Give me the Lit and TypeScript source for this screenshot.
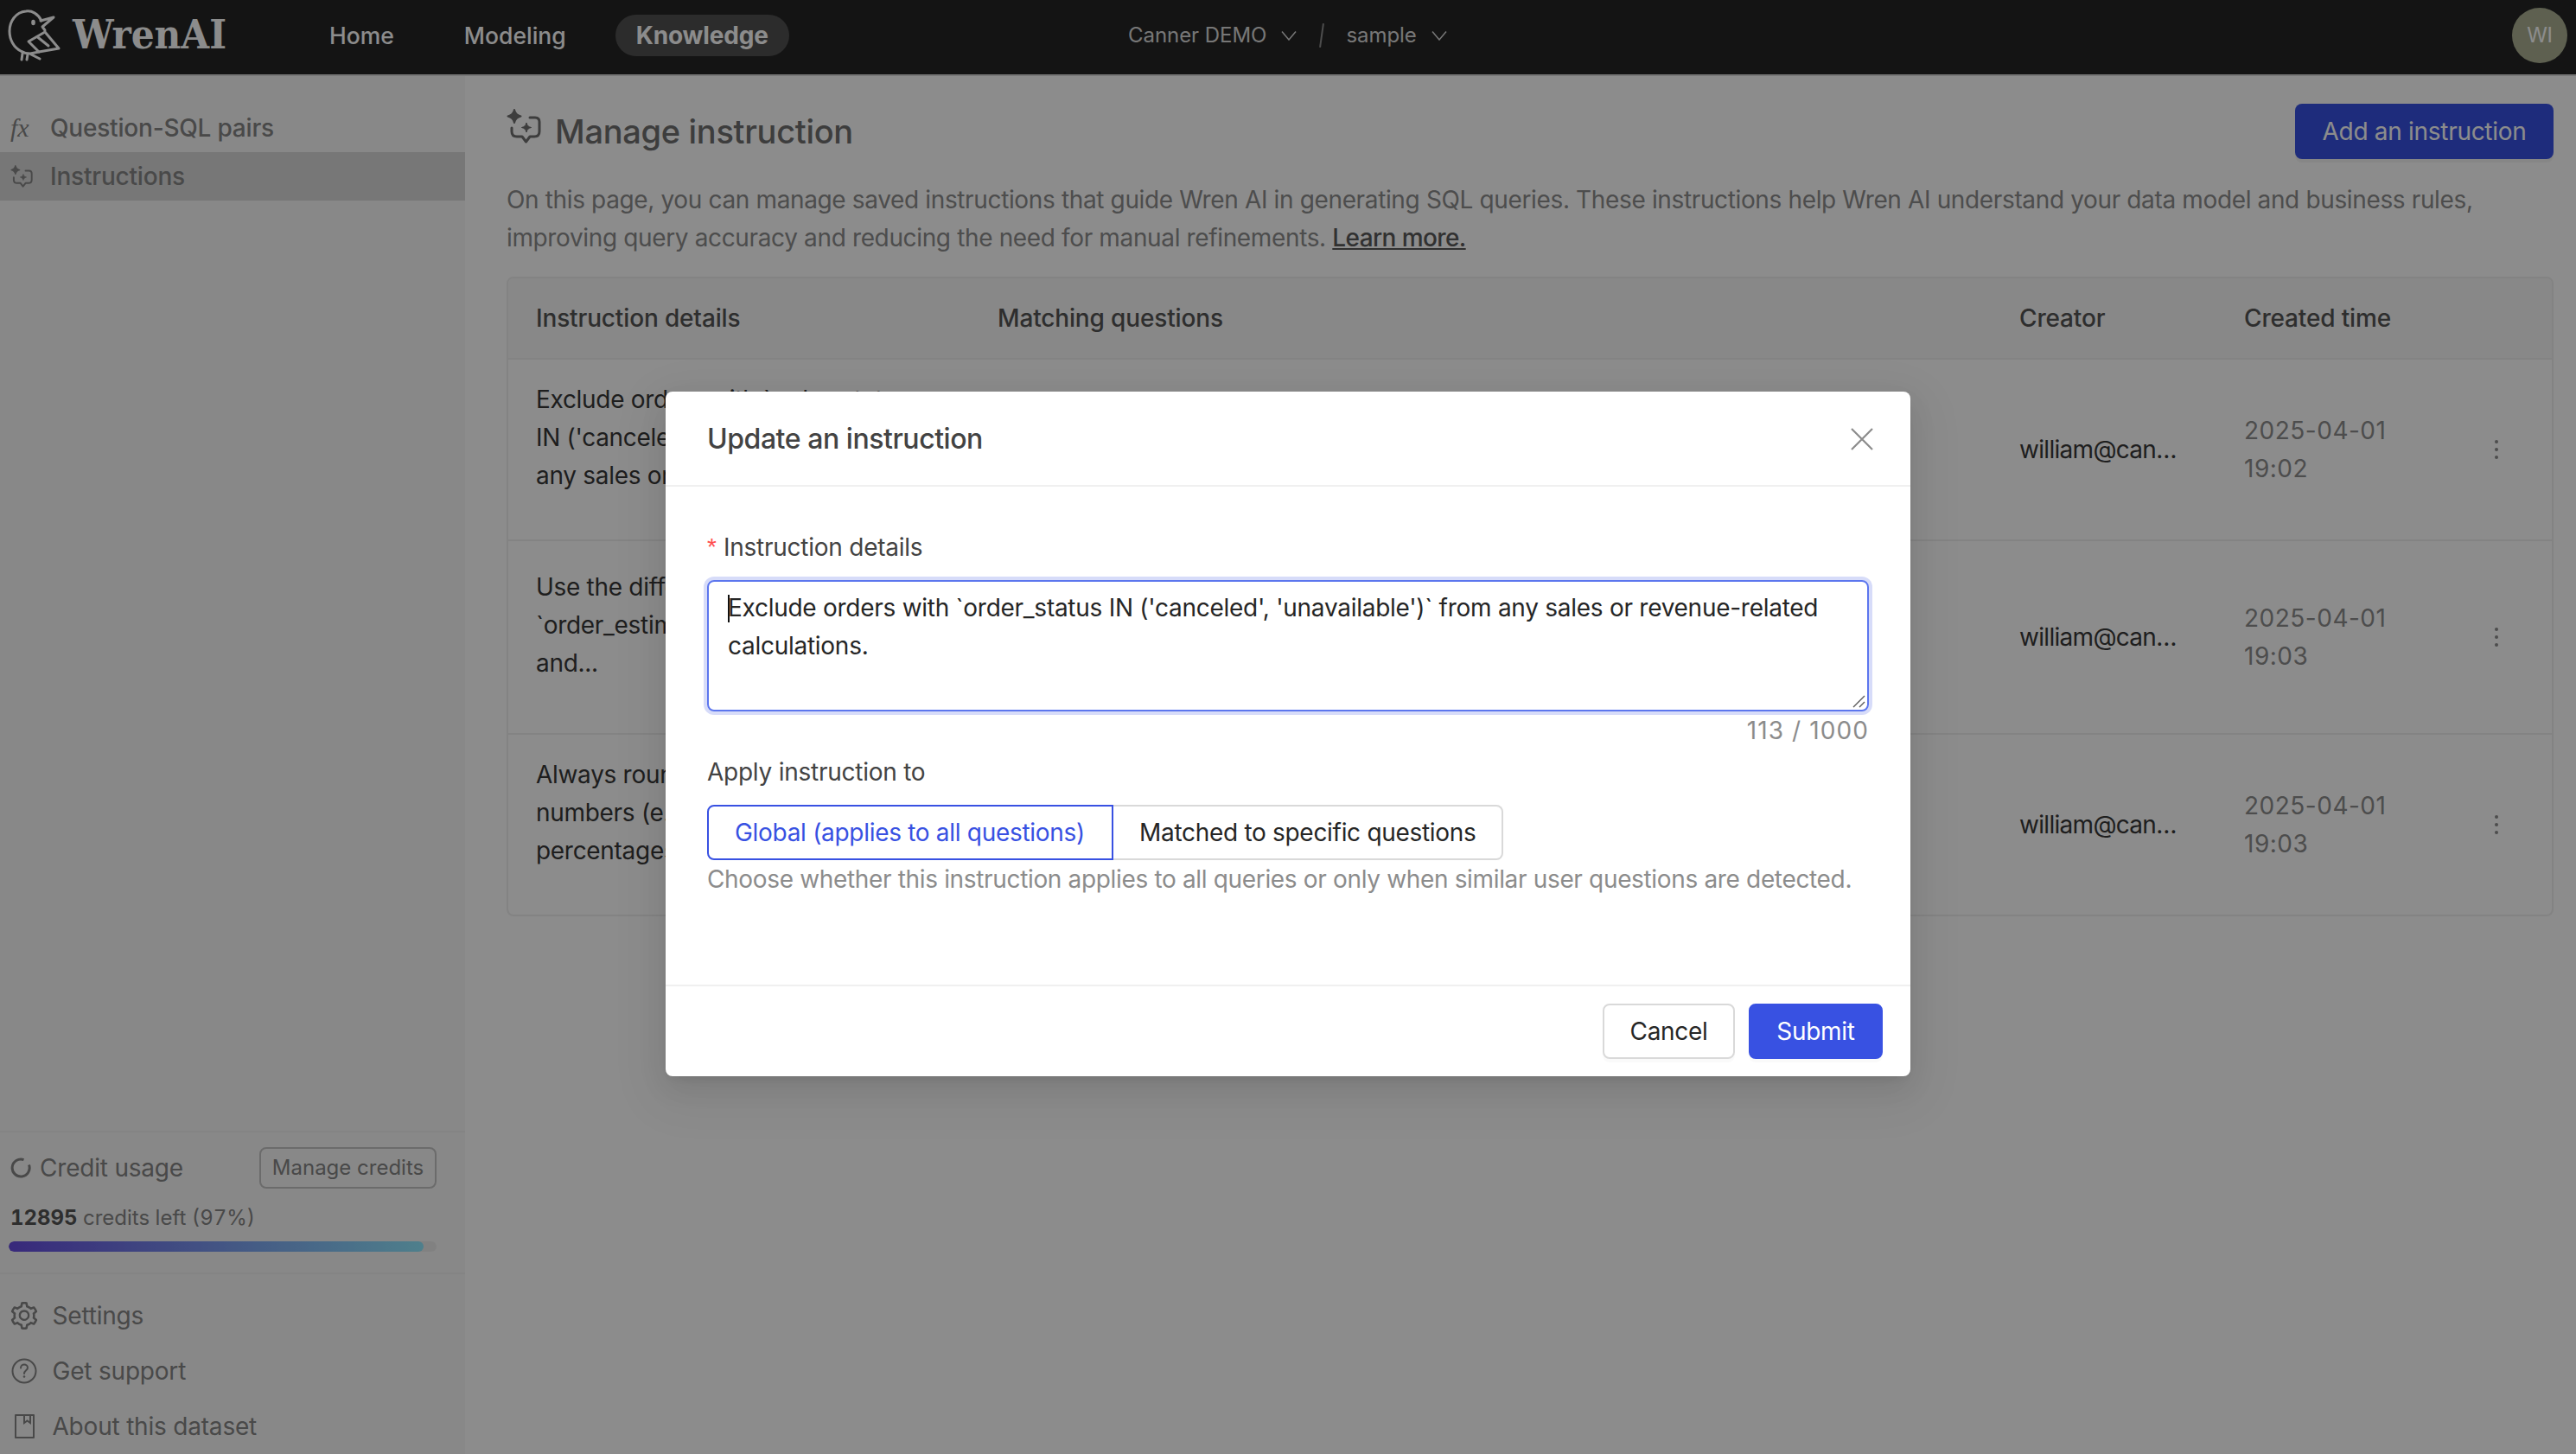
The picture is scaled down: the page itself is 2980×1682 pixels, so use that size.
import { LitElement, html, css } from "lit";
import { customElement } from "lit/decorators.js";

const GEAR = "M924.8 625.7l-65.5-56c3.1-19 4.7-38.4 4.7-57.8s-1.6-38.8-4.7-57.8l65.5-56a32.03 32.03 0 0 0 9.3-35.2l-.9-2.6a443.74 443.74 0 0 0-79.7-137.9l-1.8-2.1a32.12 32.12 0 0 0-35.1-9.5l-81.3 28.9c-30-24.6-63.5-44-99.7-57.6l-15.7-85a32.05 32.05 0 0 0-25.8-25.7l-2.7-.5c-52.1-9.4-106.9-9.4-159 0l-2.7.5a32.05 32.05 0 0 0-25.8 25.7l-15.8 85.4a351.86 351.86 0 0 0-99 57.4l-81.9-29.1a32 32 0 0 0-35.1 9.5l-1.8 2.1a446.02 446.02 0 0 0-79.7 137.9l-.9 2.6c-4.5 12.5-.8 26.5 9.3 35.2l66.3 56.6c-3.1 18.8-4.6 38-4.6 57.1 0 19.2 1.5 38.4 4.6 57.1L99 625.5a32.03 32.03 0 0 0-9.3 35.2l.9 2.6c18.1 50.4 44.9 96.9 79.7 137.9l1.8 2.1a32.12 32.12 0 0 0 35.1 9.5l81.9-29.1c29.8 24.5 63.1 43.9 99 57.4l15.8 85.4a32.05 32.05 0 0 0 25.8 25.7l2.7.5a449.4 449.4 0 0 0 159 0l2.7-.5a32.05 32.05 0 0 0 25.8-25.7l15.7-85a350 350 0 0 0 99.7-57.6l81.3 28.9a32 32 0 0 0 35.1-9.5l1.8-2.1c34.8-41.1 61.6-87.5 79.7-137.9l.9-2.6c4.5-12.3.8-26.3-9.3-35zM788.3 465.9c2.5 15.1 3.8 30.6 3.8 46.1s-1.3 31-3.8 46.1l-6.6 40.1 74.7 63.9a370.03 370.03 0 0 1-42.6 73.6L721 702.8l-31.4 25.8c-23.9 19.6-50.5 35-79.3 45.8l-38.1 14.3-17.9 97a377.5 377.5 0 0 1-85 0l-17.9-97.2-37.8-14.5c-28.5-10.8-55-26.2-78.7-45.7l-31.4-25.9-93.4 33.2c-17-22.9-31.2-47.6-42.6-73.6l75.5-64.5-6.5-40c-2.4-14.9-3.7-30.3-3.7-45.5 0-15.3 1.2-30.6 3.7-45.5l6.5-40-75.5-64.5c11.3-26.1 25.6-50.7 42.6-73.6l93.4 33.2 31.4-25.9c23.7-19.5 50.2-34.9 78.7-45.7l37.9-14.3 17.9-97.2c28.1-3.2 56.8-3.2 85 0l17.9 97 38.1 14.3c28.7 10.8 55.4 26.2 79.3 45.8l31.4 25.8 92.8-32.9c17 22.9 31.2 47.6 42.6 73.6L781.8 426l6.5 39.9zM512 326c-97.2 0-176 78.8-176 176s78.8 176 176 176 176-78.8 176-176-78.8-176-176-176zm79.2 255.2A111.6 111.6 0 0 1 512 614c-29.9 0-58-11.7-79.2-32.8A111.6 111.6 0 0 1 400 502c0-29.9 11.7-58 32.8-79.2C454 401.6 482.1 390 512 390c29.9 0 58 11.6 79.2 32.8A111.6 111.6 0 0 1 624 502c0 29.9-11.7 58-32.8 79.2z";

const instructionIcon = (cls: string) => html`<svg class=${cls} viewBox="6 6 40 40" fill="none">
  <path d="M15 7c1 4.500 3 6.500 7.500 7.500-4.500 1-6.500 3-7.500 7.500-1-4.500-3-6.500-7.500-7.500 4.500-1 6.500-3 7.500-7.500z" fill="currentColor" stroke="currentColor" stroke-width="2" stroke-linejoin="round"/>
  <path d="M29 22c.8 3.300 2.200 4.700 5.500 5.500-3.300.8-4.700 2.200-5.500 5.500-.8-3.300-2.200-4.700-5.500-5.500 3.300-.8 4.700-2.200 5.500-5.500z" fill="currentColor" stroke="currentColor" stroke-width="1"/>
  <path d="M33 16h6c3.500 0 5 1.600 5 5v11c0 4-2 6-6 6h-5l-4.500 6-4.500-6h-6c-4 0-6-2-6-6v-4" stroke="currentColor" stroke-width="3" stroke-linecap="round" stroke-linejoin="round"/>
</svg>`;

const chevron = html`<svg class="chev" viewBox="0 0 18 12" fill="none"><path d="M1 1.500l8 9.500 8-9.500" stroke="currentColor" stroke-width="1.500"/></svg>`;

const ROWS = [
  { cls: "r1", lines: ["Exclude orders with `order_status", "IN ('canceled', 'unavailable')` from", "any sales or revenue-related"], time: "19:02" },
  { cls: "r2", lines: ["Use the difference between", "`order_estimated_delivery_date`", "and..."], time: "19:03" },
  { cls: "r3", lines: ["Always round monetary values to two", "numbers (e.g., sales, revenue, and", "percentages) in the final output"], time: "19:03" },
];

@customElement("app-root")
export class AppRoot extends LitElement {
  static styles = css`
    :host { display: block; position: relative; width: 2980px; height: 1682px; overflow: hidden; background: #fff; font-family: Inter, "Noto Sans", sans-serif; font-size: 28px; line-height: 44px; color: #383838; letter-spacing: -0.3px; }
    * { box-sizing: border-box; }
    .app { display: flex; flex-direction: column; height: 100%; }

    .header { flex: none; height: 88px; background: #262626; border-bottom: 2px solid #d9d9d9; display: flex; align-items: center; padding-bottom: 5px; color: #fff; }
    .logo { flex: none; width: 357px; display: flex; align-items: center; height: 80px; align-self: flex-start; }
    .bird { flex: none; width: 80px; height: 80px; color: #fff; }
    .wordmark { font-family: "DejaVu Serif", serif; font-stretch: condensed; font-weight: 700; font-size: 47px; line-height: 80px; margin-left: 4px; color: #fff; letter-spacing: 0; }
    .nav { flex: none; width: 948px; display: flex; align-items: center; gap: 33px; }
    .nav span { height: 48px; line-height: 48px; padding: 0 24px; border-radius: 24px; font-weight: 500; font-size: 26.5px; letter-spacing: 0; white-space: nowrap; }
    .nav .on { background: rgba(255,255,255,.2); font-weight: 700; font-size: 28px; letter-spacing: -0.15px; }
    .sel { display: flex; align-items: center; color: #d9d9d9; font-size: 24px; line-height: 40px; letter-spacing: -0.05px; }
    .chev { width: 18px; height: 12px; margin: 0 0 0 17px; color: #d9d9d9; flex: none; }
    .slash { width: 2px; height: 28px; background: #8c8c8c; transform: rotate(8deg); margin: 0 27px 0 28px; }
    .avatar { flex: none; margin-left: auto; margin-right: 10px; width: 64px; height: 64px; border-radius: 50%; background: #abb092; color: #fff; font-size: 24px; display: flex; align-items: center; justify-content: center; }

    .body { flex: 1; display: flex; min-height: 0; }
    .side { flex: none; width: 538px; background: #f8f8f8; display: flex; flex-direction: column; padding-top: 32px; color: #858585; letter-spacing: -0.2px; }
    .item { height: 56px; display: flex; align-items: center; font-weight: 500; padding-left: 12px; color: #858585; }
    .item.on { background: #d9d9d9; }
    .item .ic { flex: none; width: 46px; display: flex; align-items: center; }
    .fx { font-family: "Liberation Serif", serif; font-style: italic; font-size: 30px; font-weight: 400; padding-left: 0; }
    .side-ins { width: 26px; height: 26px; display: block; }
    .credit { margin-top: auto; border-top: 2px solid #f0f0f0; border-bottom: 2px solid #f0f0f0; padding: 17px 33px 24px 10px; }
    .c-row { display: flex; align-items: center; justify-content: space-between; height: 48px; padding-left: 2px; }
    .c-lab { display: flex; align-items: center; gap: 10px; color: #858585; }
    .ring { width: 24px; height: 24px; flex: none; color: #858585; }
    .mcbtn { height: 48px; width: 205px; border: 2px solid #c4c4c4; border-radius: 8px; font-size: 24px; line-height: 44px; text-align: center; color: #858585; background: transparent; letter-spacing: 0; }
    .c-left { font-size: 24px; line-height: 32px; margin-top: 18px; padding-left: 2px; color: #858585; letter-spacing: 0; font-variant-numeric: tabular-nums; }
    .c-left b { color: #545454; font-weight: 700; }
    .track { height: 12px; border-radius: 6px; background: #ececec; margin-top: 11px; overflow: hidden; }
    .fill { height: 100%; border-radius: 6px; background: linear-gradient(90deg, #664be0, #8fe8ff); }
    .links { padding-top: 16px; }
    .lnk { height: 64px; display: flex; align-items: center; padding-left: 12px; color: #858585; }
    .lnk .ic { width: 48.5px; flex: none; display: flex; }
    .lnk svg { width: 32px; height: 32px; }

    .main { flex: 1; min-width: 0; padding: 32px 26px 0 48px; }
    .top { display: flex; align-items: center; height: 64px; }
    .top-ins { width: 40px; height: 40px; flex: none; align-self: flex-start; margin-top: 6px; color: #707070; }
    .top h1 { margin: 0 0 0 16px; font-size: 38px; line-height: 60px; font-weight: 500; color: #707070; }
    .add { margin-left: auto; height: 64px; width: 299px; border-radius: 8px; background: #3851e2; color: #fff; font-size: 28px; line-height: 64px; text-align: center; box-shadow: 0 4px 0 rgba(0,0,0,.04); }
    .desc { margin: 25px 0 0; color: #8c8c8c; width: 2330px; letter-spacing: -0.36px; }
    .desc a { color: #595959; text-decoration: underline; font-weight: 500; letter-spacing: -0.6px; }
    .tbl-wrap { margin-top: 23px; border: 2px solid #eeeeee; border-radius: 8px; overflow: hidden; height: 740px; }
    table { border-collapse: separate; border-spacing: 0; table-layout: fixed; width: 2364px; }
    .c1 { width: 534px; } .c2 { width: 1182px; } .c3 { width: 260px; } .c4 { width: 276px; } .c5 { width: 112px; }
    th { height: 94px; background: #f7f7f7; text-align: left; font-weight: 500; color: #545454; padding: 0 32px; border-bottom: 2px solid #eeeeee; letter-spacing: -0.15px; }
    td { padding: 0 32px; border-bottom: 2px solid #eeeeee; vertical-align: middle; color: #383838; }
    .r1 td { height: 210px; } .r2 td { height: 224px; } .r3 td { height: 208px; border-bottom: 0; }
    td.dt { padding-bottom: 28px; white-space: nowrap; }
    td.who { white-space: nowrap; letter-spacing: -0.7px; }
    td.when { color: #8c8c8c; white-space: nowrap; letter-spacing: 0.5px; }
    td.more { padding: 0; }
    .dots { display: block; width: 6px; height: 28px; margin-left: 45px; color: #8c8c8c; }

    .mask { position: absolute; inset: 0; background: rgba(0,0,0,.45); display: flex; justify-content: center; padding-top: 453px; }
    .modal { width: 1440px; height: 792px; background: #fff; border-radius: 8px; display: flex; flex-direction: column; box-shadow: 0 12px 32px 0 rgba(0,0,0,.08), 0 6px 12px -8px rgba(0,0,0,.12), 0 18px 56px 16px rgba(0,0,0,.05); }
    .m-head { flex: none; height: 110px; border-bottom: 2px solid #f0f0f0; display: flex; align-items: center; justify-content: space-between; padding: 2px 43px 0 48px; }
    .m-title { font-size: 32px; line-height: 44px; font-weight: 500; color: #434343; letter-spacing: -0.45px; }
    .close { width: 26px; height: 26px; display: block; color: #8c8c8c; }
    .m-body { flex: 1; min-height: 0; padding: 48px 48px 0; }
    .lab { height: 44px; line-height: 44px; color: #434343; display: flex; letter-spacing: -0.25px; }
    .req { color: #ff4d4f; width: 19px; flex: none; font-family: "Liberation Sans", sans-serif; font-size: 28px; }
    .ta { position: relative; margin-top: 16px; height: 152px; border: 2px solid #5c76ee; border-radius: 8px; padding: 8px 22px; color: #262626; letter-spacing: -0.27px; box-shadow: 0 0 0 4px rgba(56,81,226,.2); }
    .caret { display: inline-block; width: 2px; height: 32px; background: #111; margin-right: -2px; vertical-align: -7px; }
    .grip { position: absolute; right: 2px; bottom: 2px; width: 16px; height: 16px; color: #595959; }
    .count { text-align: right; color: #8c8c8c; height: 44px; margin-bottom: 4px; letter-spacing: 1.1px; }
    .radios { display: flex; margin-top: 16px; height: 64px; }
    .radio { height: 64px; line-height: 60px; padding: 0 30px; border: 2px solid #d9d9d9; color: #262626; white-space: nowrap; }
    .radio.on { width: 470px; color: #3851e2; border-color: #3851e2; border-radius: 8px 0 0 8px; }
    .radio.off { border-left: 0; border-radius: 0 8px 8px 0; width: 451px; }
    .help { color: #8c8c8c; white-space: nowrap; letter-spacing: -0.34px; }
    .m-foot { flex: none; height: 106px; border-top: 2px solid #f0f0f0; display: flex; justify-content: flex-end; gap: 16px; padding: 20px 32px 0; }
    .btn { height: 64px; border-radius: 8px; font-size: 28px; line-height: 60px; text-align: center; box-shadow: 0 4px 0 rgba(0,0,0,.02); }
    .cancel { width: 153px; border: 2px solid #d9d9d9; color: #262626; }
    .submit { width: 155px; border: 2px solid #3851e2; background: #3851e2; color: #fff; }
  `;

  render() {
    return html`
      <div class="app">
        <div class="header">
          <div class="logo">
            <svg class="bird" viewBox="0 0 80 80" fill="none" stroke="currentColor" stroke-width="3" stroke-linecap="round" stroke-linejoin="round">
              <path d="M48 24C44 16 37 12 30 13 18 14 11 25 11 36c0 10 5 19 13 23 3 2 7 3 11 3l10-2"/>
              <path d="M47 24l15-4-13 11 3 4"/>
              <path d="M52 37L68 56 45 60 33 48 52 37z"/>
              <path d="M43 42.500L56 53"/>
              <path d="M26 62l-1 7M32 63l-1 6M36 63l10 5"/>
              <ellipse cx="38.500" cy="26" rx="2.300" ry="3.300" fill="currentColor" stroke="none"/>
            </svg>
            <span class="wordmark">WrenAI</span>
          </div>
          <div class="nav"><span>Home</span><span>Modeling</span><span class="on">Knowledge</span></div>
          <div class="sel">Canner DEMO ${chevron}<i class="slash"></i>sample ${chevron}</div>
          <div class="avatar">WI</div>
        </div>

        <div class="body">
          <aside class="side">
            <div class="item"><span class="ic fx">fx</span>Question-SQL pairs</div>
            <div class="item on"><span class="ic">${instructionIcon("side-ins")}</span>Instructions</div>
            <div class="credit">
              <div class="c-row">
                <span class="c-lab">
                  <svg class="ring" viewBox="0 0 24 24" fill="none"><path d="M15.500 2.600A10 10 0 1 0 21.500 8.500" stroke="currentColor" stroke-width="3"/></svg>
                  Credit usage
                </span>
                <span class="mcbtn">Manage credits</span>
              </div>
              <div class="c-left"><b>12895</b> credits left (97%)</div>
              <div class="track"><div class="fill" style="width:97%"></div></div>
            </div>
            <div class="links">
              <div class="lnk"><span class="ic"><svg viewBox="64 64 896 896" fill="currentColor"><path d=${GEAR}/></svg></span>Settings</div>
              <div class="lnk"><span class="ic"><svg viewBox="0 0 32 32" fill="none" stroke="currentColor" stroke-width="2"><circle cx="16" cy="16" r="13.500"/><path d="M12 12.500c0-2.500 2-4 4-4s4 1.500 4 3.800c0 3-4 3.200-4 6.700" stroke-linecap="round"/><circle cx="16" cy="22.500" r="1.300" fill="currentColor" stroke="none"/></svg></span>Get support</div>
              <div class="lnk"><span class="ic"><svg viewBox="0 0 32 32" fill="none" stroke="currentColor" stroke-width="2"><path d="M6 3h21v26H6z" stroke-linejoin="round"/><path d="M16 3v9l3.500-2.500L23 12V3" /></svg></span>About this dataset</div>
            </div>
          </aside>

          <main class="main">
            <div class="top">
              ${instructionIcon("top-ins")}
              <h1>Manage instruction</h1>
              <div class="add">Add an instruction</div>
            </div>
            <p class="desc">On this page, you can manage saved instructions that guide Wren AI in generating SQL queries. These instructions help Wren AI understand your data model and business rules, improving query accuracy and reducing the need for manual refinements. <a>Learn more.</a></p>
            <div class="tbl-wrap">
              <table>
                <colgroup><col class="c1"/><col class="c2"/><col class="c3"/><col class="c4"/><col class="c5"/></colgroup>
                <thead><tr><th>Instruction details</th><th>Matching questions</th><th>Creator</th><th>Created time</th><th></th></tr></thead>
                <tbody>
                  ${ROWS.map((r) => html`<tr class=${r.cls}>
                    <td class="dt">${r.lines.map((l) => html`${l}<br/>`)}</td>
                    <td></td>
                    <td class="who">william@can…</td>
                    <td class="when">2025-04-01<br/>${r.time}</td>
                    <td class="more"><svg class="dots" viewBox="0 0 6 28" fill="currentColor"><circle cx="3" cy="5" r="2"/><circle cx="3" cy="14" r="2"/><circle cx="3" cy="23" r="2"/></svg></td>
                  </tr>`)}
                </tbody>
              </table>
            </div>
          </main>
        </div>
      </div>

      <div class="mask">
        <div class="modal">
          <div class="m-head">
            <span class="m-title">Update an instruction</span>
            <svg class="close" viewBox="0 0 26 26" fill="none" stroke="currentColor" stroke-width="2.200"><path d="M1 1l24 24M25 1L1 25"/></svg>
          </div>
          <div class="m-body">
            <div class="lab"><span class="req">*</span>Instruction details</div>
            <div class="ta"><span class="caret"></span>Exclude orders with \`order_status IN ('canceled', 'unavailable')\` from any sales or revenue-related calculations.
              <svg class="grip" viewBox="0 0 16 16" fill="none" stroke="currentColor" stroke-width="1.400"><path d="M2 15L15 2M9 15l6-6"/></svg>
            </div>
            <div class="count">113 / 1000</div>
            <div class="lab">Apply instruction to</div>
            <div class="radios">
              <div class="radio on">Global (applies to all questions)</div>
              <div class="radio off">Matched to specific questions</div>
            </div>
            <div class="help">Choose whether this instruction applies to all queries or only when similar user questions are detected.</div>
          </div>
          <div class="m-foot">
            <div class="btn cancel">Cancel</div>
            <div class="btn submit">Submit</div>
          </div>
        </div>
      </div>
    `;
  }
}
